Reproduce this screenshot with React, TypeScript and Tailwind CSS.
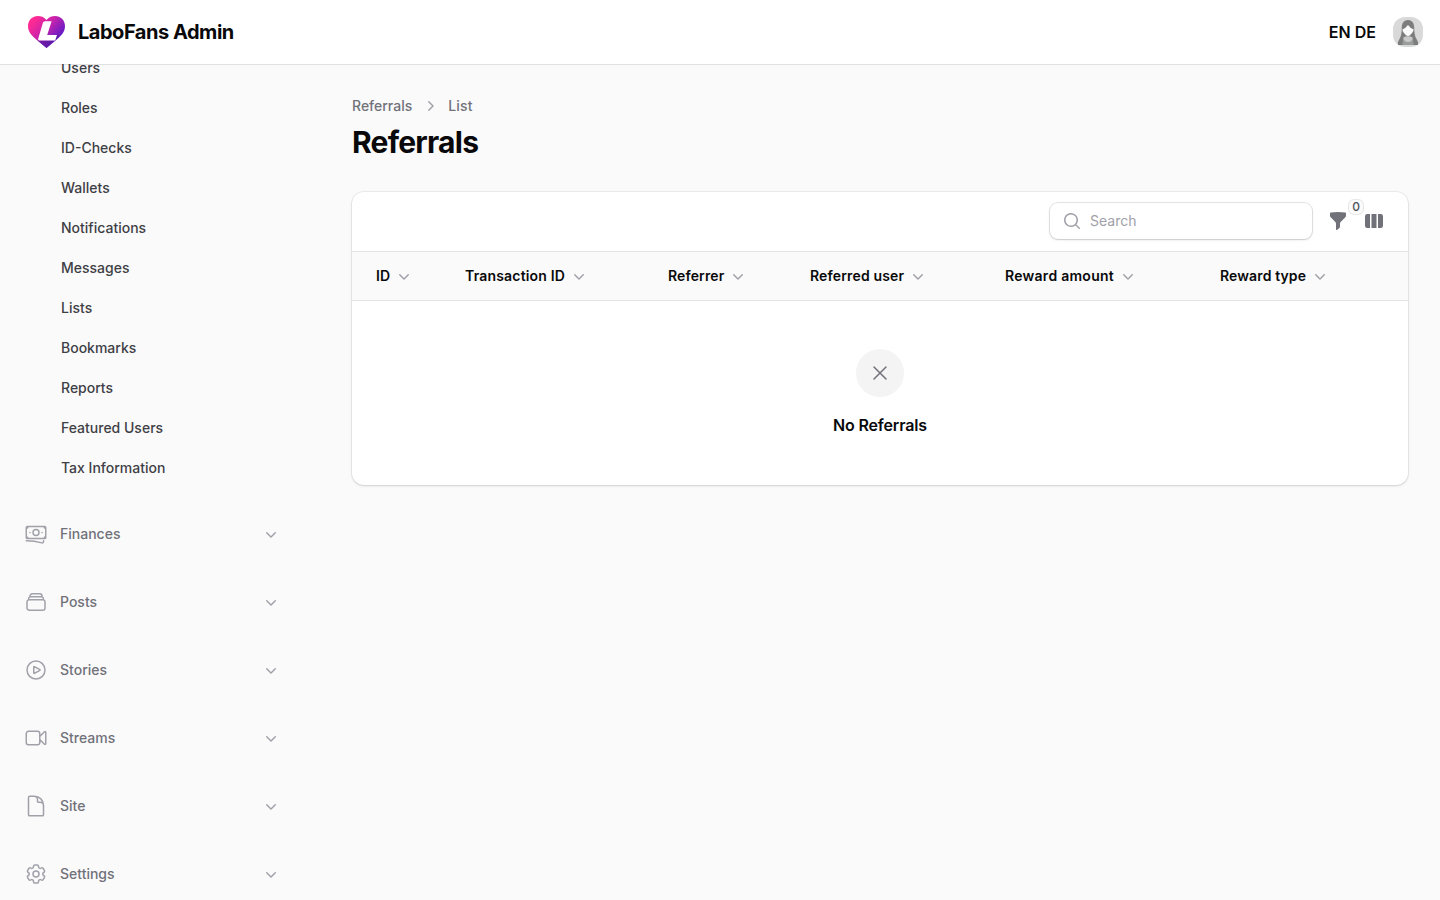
import {
  HiOutlineBanknotes,
  HiOutlineRectangleStack,
  HiOutlinePlayCircle,
  HiOutlineVideoCamera,
  HiOutlineDocument,
  HiOutlineCog6Tooth,
  HiOutlineXMark,
  HiMiniChevronDown,
  HiMiniChevronRight,
  HiMiniMagnifyingGlass,
  HiMiniFunnel,
  HiMiniViewColumns,
} from "react-icons/hi2";

const userLinks = [
  "Users",
  "Roles",
  "ID-Checks",
  "Wallets",
  "Notifications",
  "Messages",
  "Lists",
  "Bookmarks",
  "Reports",
  "Featured Users",
  "Tax Information",
];

const groups = [
  { label: "Finances", Icon: HiOutlineBanknotes },
  { label: "Posts", Icon: HiOutlineRectangleStack },
  { label: "Stories", Icon: HiOutlinePlayCircle },
  { label: "Streams", Icon: HiOutlineVideoCamera },
  { label: "Site", Icon: HiOutlineDocument },
  { label: "Settings", Icon: HiOutlineCog6Tooth },
];

const columns = [
  { label: "ID", tracking: "tracking-normal" },
  { label: "Transaction ID", tracking: "tracking-[0.18px]" },
  { label: "Referrer", tracking: "tracking-[0.12px]" },
  { label: "Referred user", tracking: "tracking-[0.15px]" },
  { label: "Reward amount", tracking: "tracking-[0.27px]" },
  { label: "Reward type", tracking: "tracking-[0.12px]" },
];

function Logo() {
  return (
    <svg viewBox="0 0 37 33" preserveAspectRatio="none" className="h-8 w-[37px] shrink-0" aria-hidden="true">
      <defs>
        <linearGradient id="heart" x1="6" y1="4" x2="29" y2="23" gradientUnits="userSpaceOnUse">
          <stop offset="0" stopColor="#ff2a93" />
          <stop offset="0.5" stopColor="#c723ac" />
          <stop offset="1" stopColor="#6a1bc4" />
        </linearGradient>
      </defs>
      <path
        d="M18.5 4C15.7 1 12.9 0 10 0 4.300 0 0 4.400 0 10.300 0 16.500 4 20.500 8.500 24.500L18.500 33 28.500 24.500C33 20.500 37 16.500 37 10.300 37 4.400 32.700 0 27 0 24.100 0 21.300 1 18.500 4Z"
        fill="url(#heart)"
      />
      <path d="M9.500 25.300H26L30 18.500 31.500 21.500 18.500 33Z" fill="#5b1ba0" opacity="0.75" />
      <path
        d="M17 5.300H23.600L19.200 19.600H29L27.200 25.300H11.500Q9.700 25.300 10.200 23.500L14.900 7Q15.400 5.300 17 5.300Z"
        fill="#fff"
      />
    </svg>
  );
}

function Avatar() {
  return (
    <svg viewBox="0 0 30 30" className="size-[30px] rounded-[12px]" aria-hidden="true">
      <rect width="30" height="30" fill="#d9d9d9" />
      <path
        d="M15 3C11 3 9 5.800 8.800 10.500 8.700 15.500 8.300 19 6.500 22 5 24.500 4.600 26 5 28H25C25.400 26 25 24.500 23.500 22 21.700 19 21.300 15.500 21.200 10.500 21 5.800 19 3 15 3Z"
        fill="#7d7d7d"
      />
      <path d="M10 21Q12.800 19.800 12.800 17.500H17.200Q17.200 19.800 20 21L20.500 28H9.500Z" fill="#9a9d9c" />
      <path d="M10.300 20.500Q15 18.500 19.700 20.500 19 25 15 25 11 25 10.300 20.500Z" fill="#c9c9c9" />
      <path d="M9.300 12.500Q13 11 15 8 17 11 20.700 12.500 20.300 16.300 15 19.300 9.700 16.300 9.300 12.500Z" fill="#fafafa" />
    </svg>
  );
}

export default function App() {
  return (
    <div className="flex h-screen flex-col overflow-hidden bg-[#fafafa] font-['Inter',sans-serif] text-[#09090b]">
      <header className="z-10 flex h-16 shrink-0 items-center bg-white pr-[17px] pl-7 ring-1 ring-[#09090b]/10">
        <Logo />
        <div className="ml-[13px] text-xl leading-5 font-bold tracking-[-0.47px]">LaboFans Admin</div>
        <div className="ml-auto font-[560] tracking-[0.05px]">EN DE</div>
        <div className="ml-[17px]">
          <Avatar />
        </div>
      </header>

      <div className="flex min-h-0 flex-1">
        <aside className="w-80 shrink-0 overflow-hidden">
          <nav className="-mt-[14px] flex flex-col gap-7 px-4">
            <ul className="flex flex-col gap-1 pl-[45px]">
              {userLinks.map((label) => (
                <li key={label} className="flex h-9 items-center text-sm font-medium text-[#3f3f46]">
                  {label}
                </li>
              ))}
            </ul>
            {groups.map(({ label, Icon }) => (
              <div key={label} className="flex h-10 items-center gap-3 pr-[23px] pl-2">
                <Icon className="size-6 text-[#a1a1aa]" />
                <span className="flex-1 text-sm font-medium text-[#71717a]">{label}</span>
                <HiMiniChevronDown className="size-5 text-[#a1a1aa]" />
              </div>
            ))}
          </nav>
        </aside>

        <main className="min-w-0 flex-1 px-8 pt-8">
          <div className="flex items-center text-sm font-medium text-[#71717a]">
            <span>Referrals</span>
            <HiMiniChevronRight className="mx-2 size-5 text-[#a1a1aa]" />
            <span className="tracking-[0.2px]">List</span>
          </div>
          <h1 className="mt-2 text-3xl leading-9 font-bold tracking-tight">Referrals</h1>

          <section className="mt-8 rounded-xl bg-white shadow-sm ring-1 ring-[#09090b]/5">
            <div className="flex items-center justify-end gap-4 px-6 pt-[11px] pb-3">
              <div className="flex h-9 w-[262px] items-center gap-2 rounded-lg bg-white pl-3 text-sm text-[#a1a1aa] shadow-sm ring-1 ring-[#09090b]/10">
                <HiMiniMagnifyingGlass className="size-5" />
                <span>Search</span>
              </div>
              <div className="relative size-5">
                <HiMiniFunnel className="size-5 text-[#71717a]" />
                <span className="absolute -top-3 left-5 flex h-4 w-4 items-center justify-center rounded-md bg-[#fafafa] text-xs font-medium text-[#52525b] ring-1 ring-[#52525b]/10 ring-inset">
                  0
                </span>
              </div>
              <HiMiniViewColumns className="size-5 text-[#71717a]" />
            </div>
            <div className="grid h-[50px] grid-cols-[89px_203px_142px_195px_215px_1fr] items-center border-y border-[#e4e4e7] bg-[#fafafa] pl-6">
              {columns.map(({ label, tracking }) => (
                <div key={label} className="flex items-center gap-1 text-sm font-semibold">
                  <span className={tracking}>{label}</span>
                  <HiMiniChevronDown className="size-5 text-[#a1a1aa]" />
                </div>
              ))}
            </div>
            <div className="flex flex-col items-center py-12">
              <div className="mb-4 rounded-full bg-[#f4f4f5] p-3">
                <HiOutlineXMark className="size-6 text-[#71717a]" />
              </div>
              <h4 className="text-base leading-6 font-semibold tracking-[-0.15px]">No Referrals</h4>
            </div>
          </section>
        </main>
      </div>
    </div>
  );
}
